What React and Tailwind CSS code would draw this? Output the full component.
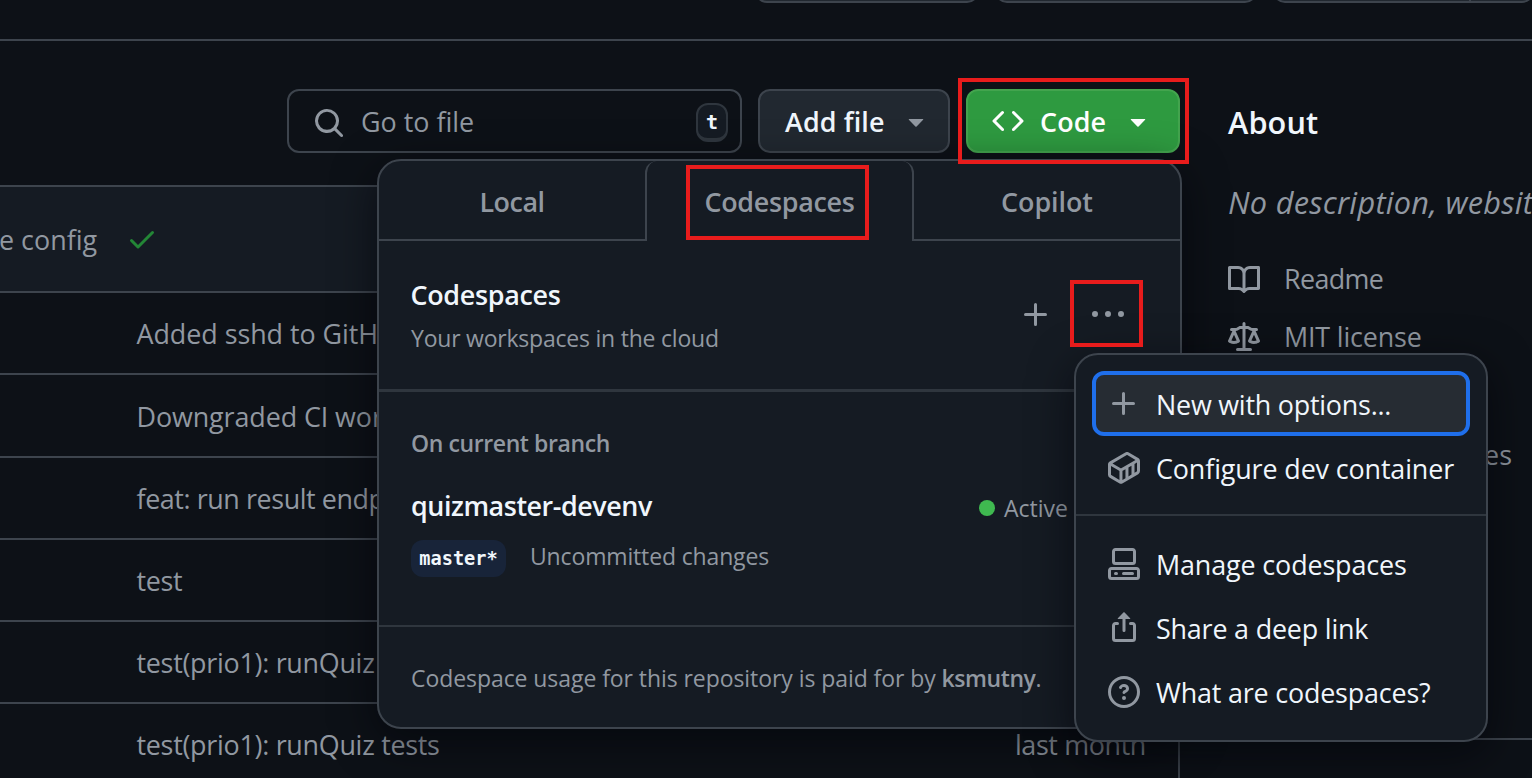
const PATHS = {
  search: "M10.68 11.74a6 6 0 0 1-7.922-8.982 6 6 0 0 1 8.982 7.922l3.04 3.04a.749.749 0 0 1-.326 1.275.749.749 0 0 1-.734-.215ZM11.5 7a4.499 4.499 0 1 0-8.997 0A4.499 4.499 0 0 0 11.5 7Z",
  code: "m11.28 3.22 4.25 4.25a.75.75 0 0 1 0 1.06l-4.25 4.25a.749.749 0 0 1-1.275-.326.749.749 0 0 1 .215-.734L13.94 8l-3.72-3.72a.749.749 0 0 1 .326-1.275.749.749 0 0 1 .734.215Zm-6.56 0a.751.751 0 0 1 1.042.018.751.751 0 0 1 .018 1.042L2.06 8l3.72 3.72a.749.749 0 0 1-.326 1.275.749.749 0 0 1-.734-.215L.47 8.53a.75.75 0 0 1 0-1.06Z",
  triangle: "m4.427 7.427 3.396 3.396a.25.25 0 0 0 .354 0l3.396-3.396A.25.25 0 0 0 11.396 7H4.604a.25.25 0 0 0-.177.427Z",
  book: "M0 1.75A.75.75 0 0 1 .75 1h4.253c1.227 0 2.317.59 3 1.501A3.743 3.743 0 0 1 11.006 1h4.245a.75.75 0 0 1 .75.75v10.5a.75.75 0 0 1-.75.75h-4.507a2.25 2.25 0 0 0-1.591.659l-.622.621a.75.75 0 0 1-1.06 0l-.622-.621A2.25 2.25 0 0 0 5.258 13H.75a.75.75 0 0 1-.75-.75Zm7.251 10.324.004-5.073-.002-2.253A2.25 2.25 0 0 0 5.003 2.5H1.5v9h3.757a3.75 3.75 0 0 1 1.994.574ZM8.755 4.75l-.004 7.322a3.752 3.752 0 0 1 1.992-.572H14.5v-9h-3.495a2.25 2.25 0 0 0-2.25 2.25Z",
  law: "M8.75.75V2h.985c.304 0 .603.08.867.231l1.29.736c.038.022.08.033.124.033h2.234a.75.75 0 0 1 0 1.5h-.427l2.111 4.692a.75.75 0 0 1-.154.838l-.53-.53.529.531-.001.002-.002.002-.006.006-.006.005-.01.01-.045.04c-.21.176-.441.327-.686.45C14.556 10.78 13.88 11 13 11a4.498 4.498 0 0 1-2.023-.454 3.544 3.544 0 0 1-.686-.45l-.045-.04-.016-.015-.006-.006-.004-.004v-.001a.75.75 0 0 1-.154-.838L12.178 4.5h-.162c-.305 0-.604-.079-.868-.231l-1.29-.736a.245.245 0 0 0-.124-.033H8.75V13h2.5a.75.75 0 0 1 0 1.5h-6.5a.75.75 0 0 1 0-1.5h2.5V3.5h-.984a.245.245 0 0 0-.124.033l-1.289.737c-.265.15-.564.23-.869.23h-.162l2.112 4.692a.75.75 0 0 1-.154.838l-.53-.53.529.531-.001.002-.002.002-.006.006-.016.015-.045.04c-.21.176-.441.327-.686.45C4.556 10.78 3.88 11 3 11a4.498 4.498 0 0 1-2.023-.454 3.544 3.544 0 0 1-.686-.45l-.045-.04-.016-.015-.006-.006-.004-.004v-.001a.75.75 0 0 1-.154-.838L2.178 4.5H1.75a.75.75 0 0 1 0-1.5h2.234a.249.249 0 0 0 .125-.033l1.288-.737c.265-.15.564-.23.869-.23h.984V.75a.75.75 0 0 1 1.5 0Zm2.945 8.477c.285.135.718.273 1.305.273s1.02-.138 1.305-.273L13 6.327Zm-10 0c.285.135.718.273 1.305.273s1.02-.138 1.305-.273L3 6.327Z",
  plus: "M7.75 2a.75.75 0 0 1 .75.75V7h4.25a.75.75 0 0 1 0 1.5H8.5v4.25a.75.75 0 0 1-1.5 0V8.5H2.75a.75.75 0 0 1 0-1.5H7V2.75A.75.75 0 0 1 7.75 2Z",
  kebab: "M8 9a1.5 1.5 0 1 0 0-3 1.5 1.5 0 0 0 0 3ZM1.5 9a1.5 1.5 0 1 0 0-3 1.5 1.5 0 0 0 0 3Zm13 0a1.5 1.5 0 1 0 0-3 1.5 1.5 0 0 0 0 3Z",
  check: "M13.78 4.22a.75.75 0 0 1 0 1.06l-7.25 7.25a.75.75 0 0 1-1.06 0L2.22 9.28a.751.751 0 0 1 .018-1.042.751.751 0 0 1 1.042-.018L6 10.94l6.72-6.72a.75.75 0 0 1 1.06 0Z",
  share: "M3.75 6.5a.25.25 0 0 0-.25.25v6.5c0 .138.112.25.25.25h8.5a.25.25 0 0 0 .25-.25v-6.5a.25.25 0 0 0-.25-.25h-1a.75.75 0 0 1 0-1.5h1c.966 0 1.75.784 1.75 1.75v6.5A1.75 1.75 0 0 1 12.25 15h-8.5A1.75 1.75 0 0 1 2 13.25v-6.5C2 5.784 2.784 5 3.75 5h1a.75.75 0 0 1 0 1.5ZM7.823.177a.25.25 0 0 1 .354 0l2.896 2.896a.25.25 0 0 1-.177.427H8.75v5.75a.75.75 0 0 1-1.5 0V3.5H5.104a.25.25 0 0 1-.177-.427Z",
  codespaces: "M0 11.25c0-.966.784-1.75 1.75-1.75h12.5c.966 0 1.75.784 1.75 1.75v3A1.75 1.75 0 0 1 14.25 16H1.75A1.75 1.75 0 0 1 0 14.25Zm2-9.5C2 .784 2.784 0 3.75 0h8.5C13.216 0 14 .784 14 1.75v5a1.75 1.75 0 0 1-1.75 1.75h-8.5A1.75 1.75 0 0 1 2 6.75Zm1.75-.25a.25.25 0 0 0-.25.25v5c0 .138.112.25.25.25h8.5a.25.25 0 0 0 .25-.25v-5a.25.25 0 0 0-.25-.25Zm-2 9.5a.25.25 0 0 0-.25.25v3c0 .138.112.25.25.25h12.5a.25.25 0 0 0 .25-.25v-3a.25.25 0 0 0-.25-.25ZM7 12.75a.75.75 0 0 1 .75-.75h4.5a.75.75 0 0 1 0 1.5h-4.5a.75.75 0 0 1-.75-.75Zm-4 0a.75.75 0 0 1 .75-.75h.5a.75.75 0 0 1 0 1.5h-.5a.75.75 0 0 1-.75-.75Z",
  question: "M0 8a8 8 0 1 1 16 0A8 8 0 0 1 0 8Zm8-6.5a6.5 6.5 0 1 0 0 13 6.5 6.5 0 0 0 0-13ZM6.92 6.085h.001a.749.749 0 1 1-1.342-.67c.169-.339.436-.701.849-.977C6.845 4.16 7.369 4 8 4a2.756 2.756 0 0 1 1.637.525c.503.377.863.965.863 1.725 0 .448-.115.83-.329 1.15-.205.307-.47.513-.692.662-.109.072-.22.138-.313.195l-.006.004a6.24 6.24 0 0 0-.26.16.952.952 0 0 0-.276.245.75.75 0 0 1-1.248-.832c.184-.264.42-.489.692-.661.103-.067.207-.132.313-.195l.007-.004c.1-.061.182-.11.258-.161a.969.969 0 0 0 .277-.245C8.96 6.514 9 6.427 9 6.25a.612.612 0 0 0-.262-.525A1.27 1.27 0 0 0 8 5.5c-.369 0-.595.09-.74.187a1.01 1.01 0 0 0-.34.398ZM9 11a1 1 0 1 1-2 0 1 1 0 0 1 2 0Z",
  container: "m10.41.24 4.711 2.774c.544.316.878.897.879 1.526v5.01a1.77 1.77 0 0 1-.88 1.53l-7.753 4.521-.002.001a1.769 1.769 0 0 1-1.774 0H5.59L.873 12.85A1.761 1.761 0 0 1 0 11.327V6.292c0-.304.078-.598.22-.855l.004-.005.01-.019c.15-.262.369-.486.64-.643L8.641.239a1.752 1.752 0 0 1 1.765 0l.002.001ZM9.397 1.534l-7.17 4.182 4.116 2.388a.27.27 0 0 0 .269 0l7.152-4.148-4.115-2.422a.252.252 0 0 0-.252 0Zm-7.768 10.02 4.1 2.393V9.474a1.807 1.807 0 0 1-.138-.072L1.5 7.029v4.298c0 .095.05.181.129.227Zm8.6.642 1.521-.887v-4.45l-1.521.882ZM7.365 9.402h.001c-.044.026-.09.049-.136.071v4.472l1.5-.875V8.61Zm5.885 1.032 1.115-.65h.002a.267.267 0 0 0 .133-.232V5.264l-1.25.725Z",
};

function Icon({ name, className = "" }) {
  return (
    <svg viewBox="0 0 16 16" fill="currentColor" className={`size-8 shrink-0 ${className}`}>
      <path d={PATHS[name]} />
    </svg>
  );
}

const commits = [
  { text: "Added sshd to GitH", height: "h-[82px]", tracking: "tracking-[-0.05px]" },
  { text: "Downgraded CI wor", height: "h-[83px]", tracking: "tracking-[-0.1px]" },
  { text: "feat: run result endp", height: "h-[82px]", tracking: "tracking-[-0.42px]" },
  { text: "test", height: "h-[82px]", tracking: "tracking-[-0.3px]" },
  { text: "test(prio1): runQuiz", height: "h-[82px]", tracking: "tracking-[-0.28px]" },
  { text: "test(prio1): runQuiz tests", height: "h-[82px]", tracking: "tracking-[-0.28px]", age: "last month" },
];

function RepoActions() {
  return (
    <div className="flex h-[41px] flex-col border-b-2 border-[#3d444d]">
      <div className="flex h-[3px] items-end gap-4 overflow-hidden pl-[755px]">
        <div className="h-16 w-[224px] shrink-0 rounded-xl border-2 border-[#3d444d] bg-[#212830]" />
        <div className="h-16 w-[262px] shrink-0 rounded-xl border-2 border-[#3d444d] bg-[#212830]" />
        <div className="flex h-16 w-[261px] shrink-0 rounded-xl border-2 border-[#3d444d] bg-[#212830]">
          <div className="w-[196px] border-r-2 border-[#3d444d]" />
        </div>
      </div>
    </div>
  );
}

function Toolbar() {
  return (
    <div className="flex h-16 gap-4 pl-[287px]">
      <div className="flex w-[455px] items-center rounded-xl border-2 border-[#3d444d] pr-3 pl-6">
        <Icon name="search" className="mt-1 text-[#9198a1]" />
        <span className="mt-[2px] ml-4 flex-1 text-[#9198a1]">Go to file</span>
        <kbd className="mt-[2px] flex h-[39px] w-8 items-center justify-center rounded-xl border-2 border-b-4 border-[#2f363e] bg-[#151b23] pt-[2px] font-['DejaVu_Sans_Mono',monospace] text-[20px] font-bold text-[#f0f6fc]">
          t
        </kbd>
      </div>
      <button className="flex w-48 items-center rounded-xl border-2 border-[#3d444d] bg-[#212830] pl-[25px] font-semibold tracking-[0.15px] text-[#f0f6fc]">
        <span className="mt-[2px] w-[115px] text-left">Add file</span>
        <Icon name="triangle" className="text-[#9198a1]" />
      </button>
      <button className="flex w-[214px] items-center rounded-xl border-2 border-[#43a44e] bg-[#2e9a40] pl-6 font-semibold text-white">
        <Icon name="code" />
        <span className="mt-[2px] ml-4 w-[82px] text-left tracking-[0.1px]">Code</span>
        <Icon name="triangle" />
      </button>
    </div>
  );
}

function FileTable() {
  return (
    <div className="mt-8 border-t-2 border-r-2 border-[#3d444d]">
      <div className="flex h-[106px] items-center border-b-2 border-[#3d444d] bg-[#151b23] text-[#9198a1]">
        <span className="mt-[2px] -ml-px w-[127px]">e config</span>
        <Icon name="check" className="text-[#238636]" />
      </div>
      {commits.map((c, i) => (
        <div key={i} className={`flex items-center justify-between border-b-2 border-[#3d444d] pt-[2px] pr-8 pl-[136.5px] text-[#9198a1] ${c.height}`}>
          <span className={c.tracking}>{c.text}</span>
          <span className="tracking-[-0.37px]">{c.age}</span>
        </div>
      ))}
    </div>
  );
}

function Sidebar() {
  return (
    <aside className="h-[651px] w-[304px] shrink-0 border-b-2 border-[#3d444d] text-[#9198a1]">
      <h2 className="text-[30.7px] leading-[66px] font-semibold tracking-[0.1px] text-[#f0f6fc]">About</h2>
      <p className="mt-[23px] text-[30.7px] leading-12 tracking-[0.28px] whitespace-nowrap italic">No description, websit</p>
      <div className="mt-[33px] flex h-10 items-center gap-6 tracking-[-0.65px]">
        <Icon name="book" className="mt-[2px]" />
        Readme
      </div>
      <div className="mt-[18px] flex h-10 items-center gap-6 tracking-[-0.17px]">
        <Icon name="law" className="mt-[2px]" />
        MIT license
      </div>
      <div className="mt-[78px] pr-5 text-right leading-10">es</div>
    </aside>
  );
}

function CodeMenu() {
  return (
    <section className="absolute top-[159px] left-[377px] flex h-[570px] w-[805px] flex-col overflow-hidden rounded-3xl border-2 border-[#3d444d] bg-[#151b23] text-[#9198a1]">
      <nav className="flex h-20 shrink-0 text-center leading-[82px] font-semibold">
        <div className="w-[266px] border-b-2 border-[#3d444d] tracking-[-0.5px]">Local</div>
        <div className="w-[269px] rounded-t-xl border-x-2 border-[#3d444d] tracking-[-0.3px]">Codespaces</div>
        <div className="w-[266px] border-b-2 border-[#3d444d] tracking-[-0.05px]">Copilot</div>
      </nav>
      <header className="flex h-[151px] shrink-0 justify-between border-b-[3px] border-[#2f363e] py-8 pr-14 pl-8">
        <div>
          <h3 className="mt-px -ml-[0.5px] leading-[42px] font-semibold tracking-[-0.3px] text-[#f0f6fc]">Codespaces</h3>
          <p className="mt-1 text-[23px] leading-9 tracking-[-0.22px]">Your workspaces in the cloud</p>
        </div>
        <div className="flex gap-10 pt-[26px]">
          <Icon name="plus" />
          <Icon name="kebab" />
        </div>
      </header>
      <div className="flex h-[235px] shrink-0 flex-col border-b-2 border-[#2f363e] px-8 pt-[33px]">
        <h4 className="text-[23px] leading-9 font-semibold tracking-[-0.4px]">On current branch</h4>
        <div className="mt-6 flex items-center">
          <span className="w-[568px] leading-[42px] font-semibold tracking-[-0.45px] text-[#f0f6fc]">quizmaster-devenv</span>
          <span className="mt-1 mr-[9px] size-4 rounded-full bg-[#3fb950]" />
          <span className="mt-1 text-[23px] leading-9">Active</span>
        </div>
        <div className="mt-[11px] flex items-start">
          <span className="mt-[2px] flex h-[37px] w-[95px] items-center justify-center rounded-xl bg-[#182439] font-['DejaVu_Sans_Mono',monospace] text-[18.6px] font-bold text-[#f0f6fc]">
            master*
          </span>
          <span className="ml-6 text-[23px] leading-9 tracking-[-0.15px]">Uncommitted changes</span>
        </div>
      </div>
      <footer className="flex flex-1 items-center px-8 pt-[2px] text-[23px]">
        <p className="tracking-[-0.07px]">
          Codespace usage for this repository is paid for by <strong className="font-semibold tracking-[-0.44px]">ksmutny</strong>.
        </p>
      </footer>
    </section>
  );
}

function MenuItem({ icon, tracking, children, focused }) {
  const box = focused ? "h-[65px] rounded-xl border-4 border-[#1f6feb] bg-[#262c33] pl-3" : "h-16 pl-4";
  return (
    <div className={`flex items-center gap-4 ${box} ${tracking}`}>
      <Icon name={icon} className="text-[#9198a1]" />
      <span className="mt-[2px]">{children}</span>
    </div>
  );
}

function OptionsMenu() {
  return (
    <section className="absolute top-[353px] left-[1074px] flex h-[389px] w-[414px] flex-col rounded-3xl border-2 border-[#3d444d] bg-[#151b23] text-[#f0f6fc] shadow-[0_12px_44px_rgba(1,4,9,0.6)]">
      <div className="h-[161px] border-b-2 border-[#2f363e] px-4 pt-4">
        <MenuItem icon="plus" tracking="tracking-[-0.23px]" focused>New with options...</MenuItem>
        <MenuItem icon="container" tracking="tracking-[-0.13px]">Configure dev container</MenuItem>
      </div>
      <div className="px-4 pt-4">
        <MenuItem icon="codespaces" tracking="tracking-[-0.13px]">Manage codespaces</MenuItem>
        <MenuItem icon="share" tracking="tracking-[-0.19px]">Share a deep link</MenuItem>
        <MenuItem icon="question" tracking="tracking-[-0.18px]">What are codespaces?</MenuItem>
      </div>
    </section>
  );
}

export default function App() {
  return (
    <div className="relative h-[778px] w-[1532px] overflow-hidden bg-[#0d1117] font-['Open_Sans','Noto_Sans',sans-serif] text-[26.9px] leading-9 whitespace-nowrap">
      <RepoActions />
      <div className="flex gap-12 pt-12">
        <main className="w-[1180px] shrink-0">
          <Toolbar />
          <FileTable />
        </main>
        <Sidebar />
      </div>

      {/* Shadow cast on the page by the open panel. */}
      <div className="absolute top-[159px] left-[377px] h-[570px] w-[805px] rounded-3xl shadow-[0_12px_44px_rgba(1,4,9,0.6)]" />
      <CodeMenu />
      <OptionsMenu />

      {/* Highlight frames */}
      <div className="absolute top-[78px] left-[958px] h-[86px] w-[231px] border-4 border-[#e81c1c]" />
      <div className="absolute top-[165px] left-[686px] h-[75px] w-[183px] border-4 border-[#e81c1c]" />
      <div className="absolute top-[280px] left-[1070px] h-[67px] w-[73px] border-4 border-[#e81c1c]" />
    </div>
  );
}
